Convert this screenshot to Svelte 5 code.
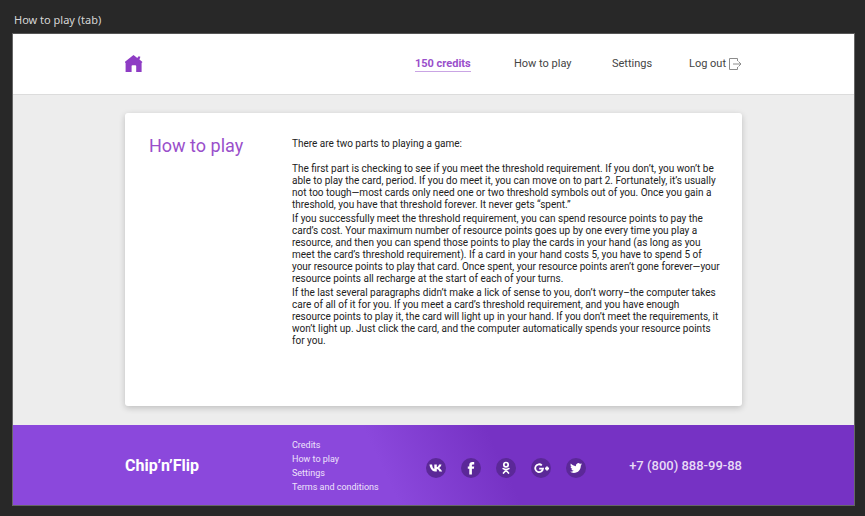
<script>
  const nav = [
    { label: 'How to play', href: '#how' },
    { label: 'Settings', href: '#settings' }
  ];

  const paragraphs = [
    `The first part is checking to see if you meet the threshold requirement. If you don’t, you won’t be
able to play the card, period. If you do meet it, you can move on to part 2. Fortunately, it’s usually
not too tough—most cards only need one or two threshold symbols out of you. Once you gain a
threshold, you have that threshold forever. It never gets “spent.”`,
    `If you successfully meet the threshold requirement, you can spend resource points to pay the
card’s cost. Your maximum number of resource points goes up by one every time you play a
resource, and then you can spend those points to play the cards in your hand (as long as you
meet the card’s threshold requirement). If a card in your hand costs 5, you have to spend 5 of
your resource points to play that card. Once spent, your resource points aren’t gone forever—your
resource points all recharge at the start of each of your turns.`,
    `If the last several paragraphs didn’t make a lick of sense to you, don’t worry–the computer takes
care of all of it for you. If you meet a card’s threshold requirement, and you have enough
resource points to play it, the card will light up in your hand. If you don’t meet the requirements, it
won’t light up. Just click the card, and the computer automatically spends your resource points
for you.`
  ];

  const links = ['Credits', 'How to play', 'Settings', 'Terms and conditions'];
</script>

<div class="canvas">
  <p class="caption">How to play (tab)</p>
  <div class="page">
    <header>
      <div class="wrap bar">
        <a class="home" href="#home" aria-label="Home">
          <svg viewBox="0 0 18 18" width="18" height="18"><path fill="#8e3cc4" d="M8.5 0 12.3 2.9 13 2V1.4H15.2V2.6L14.4 4.4 17.2 6.8V7.8H16.6V17H11.2V11.1C11.2 10.5 10.9 10.2 10.3 10.2H7.5C6.9 10.2 6.6 10.5 6.6 11.1V17H.6V7.8H0V6.8Z" /></svg>
        </a>
        <nav>
          <a class="credits" href="#credits">150 credits</a>
          {#each nav as item}
            <a href={item.href}>{item.label}</a>
          {/each}
          <a class="logout" href="#logout">
            Log out
            <svg viewBox="0 0 14 14" width="14" height="14" fill="none" stroke="#8c8c8c"><path d="M9.5 4V1.5H1.5V12.5H9.5V10M5 7H13M10.5 4.5 13 7 10.5 9.5" /></svg>
          </a>
        </nav>
      </div>
    </header>

    <main>
      <section class="wrap card">
        <h1>How to play</h1>
        <div class="text">
          <p class="lead">There are two parts to playing a game:</p>
          {#each paragraphs as text}
            <p>{text}</p>
          {/each}
        </div>
      </section>
    </main>

    <footer>
      <div class="wrap foot">
        <strong class="brand">Chip’n’Flip</strong>
        <ul class="links">
          {#each links as link}
            <li><a href="#footer">{link}</a></li>
          {/each}
        </ul>
        <div class="social">
          <a href="#vk" aria-label="VK">
            <svg viewBox="0 0 20 20"><path fill="#fff" d="M10.6 13.6C6.4 13.6 4.2 11 3.5 6.4H6.1C6.3 9 7.3 10.7 8.3 11V6.4H10.8V9.1C11.8 8.9 12.6 7.8 13 6.4H15.5C15.1 7.9 14.2 9.2 13.2 9.9C14.4 10.6 15.5 11.9 16.2 13.6H13.4C12.9 12.3 12 11.3 10.8 11.1V13.6Z" /></svg>
          </a>
          <a href="#facebook" aria-label="Facebook">
            <svg viewBox="0 0 20 20"><path fill="#fff" d="M8.3 16.4V10.8H6.8V8.5H8.3V7C8.3 5 9.4 4 11.3 4H13.2V6.4H11.9C11.2 6.4 10.9 6.7 10.9 7.3V8.5H13.2L12.9 10.8H10.9V16.4Z" /></svg>
          </a>
          <a href="#ok" aria-label="Odnoklassniki">
            <svg viewBox="0 0 20 20" fill="none" stroke="#fff" stroke-width="1.7" stroke-linecap="round"><circle cx="10" cy="6.7" r="2.2" /><path d="M7.2 10.6Q10 12.5 12.8 10.6M10 12.2 7.5 15M10 12.2 12.5 15" /></svg>
          </a>
          <a href="#google" aria-label="Google Plus">
            <svg viewBox="0 0 20 20" fill="none" stroke="#fff" stroke-width="1.8"><path d="M10.8 7.3A3.9 3.9 0 1 0 12 10.6H8.2M14 10.5H18M16 8.5V12.5" /></svg>
          </a>
          <a href="#twitter" aria-label="Twitter">
            <svg viewBox="0 0 24 24"><path fill="#fff" transform="translate(4.8 4.8) scale(.6)" d="M23.95 4.57a10 10 0 0 1-2.82.77 4.96 4.96 0 0 0 2.16-2.72c-.95.55-2 .95-3.13 1.18a4.92 4.92 0 0 0-8.38 4.48C7.69 8.1 4.07 6.13 1.64 3.16a4.92 4.92 0 0 0 1.52 6.57 4.9 4.9 0 0 1-2.23-.61v.06a4.92 4.92 0 0 0 3.95 4.83 4.99 4.99 0 0 1-2.21.08 4.94 4.94 0 0 0 4.6 3.42A9.87 9.87 0 0 1 0 19.54a13.99 13.99 0 0 0 7.56 2.21c9.05 0 14-7.5 14-13.98 0-.21 0-.42-.02-.63a9.94 9.94 0 0 0 2.46-2.55z" /></svg>
          </a>
        </div>
        <a class="phone" href="tel:+78008889988">+7 (800) 888-99-88</a>
      </div>
    </footer>
  </div>
</div>

<style>
  :global(body) {
    margin: 0;
    background: #282828;
  }

  .canvas {
    padding: 12px 10px 9px 12px;
    font-family: Roboto, sans-serif;
  }

  p,
  h1,
  ul {
    margin: 0;
    padding: 0;
    list-style: none;
  }

  a {
    color: inherit;
    text-decoration: none;
  }

  svg {
    display: block;
  }

  .caption {
    margin: 0 0 5px 2px;
    font: 11px/16px 'Noto Sans', sans-serif;
    color: #d6d6d6;
  }

  .page {
    border: 1px solid #666;
    border-top-color: #555;
    background: #ededed;
  }

  .wrap {
    box-sizing: border-box;
    margin: 0 112px;
  }

  header {
    background: #fff;
    border-bottom: 1px solid #dcdcdc;
  }

  .bar {
    display: flex;
    align-items: center;
    justify-content: space-between;
    height: 60px;
  }

  nav {
    display: grid;
    grid-template-columns: 99px 98px 77px auto;
    align-items: center;
    font-size: 11px;
    line-height: 14px;
    color: #444;
  }

  .credits {
    justify-self: start;
    padding-top: 1px;
    border-bottom: 1px solid #c9a4e4;
    font-weight: 700;
    color: #9a4fcb;
  }

  .logout {
    display: flex;
    align-items: center;
    gap: 2px;
  }

  main {
    padding: 18px 0 19px;
  }

  .card {
    display: grid;
    grid-template-columns: 143px 1fr;
    min-height: 293px;
    padding: 24px 16px 24px 24px;
    border-radius: 3px;
    background: #fff;
    box-shadow: 0 2px 6px rgba(0, 0, 0, 0.2);
  }

  h1 {
    font-size: 18px;
    line-height: 18px;
    font-weight: 400;
    color: #9a4fcb;
  }

  .text {
    display: grid;
    align-content: start;
    gap: 2px;
    padding-top: 1px;
    font-size: 10px;
    line-height: 12px;
    color: #222;
    white-space: pre-line;
  }

  .lead {
    margin-bottom: 11px;
  }

  footer {
    background: linear-gradient(65deg, #8b48dc 44%, #7632c4 58%);
    color: #fff;
  }

  .foot {
    display: grid;
    grid-template-columns: 167px 134px auto 1fr;
    align-items: center;
    height: 80px;
    padding-top: 2px;
  }

  .brand {
    font-size: 16px;
    line-height: 20px;
  }

  .links {
    font-size: 9px;
    line-height: 14px;
    color: #eee2fb;
  }

  .social {
    display: flex;
    gap: 15px;
    padding-top: 4px;
  }

  .social a {
    width: 20px;
    height: 20px;
    border-radius: 50%;
    background: #5b2898;
  }

  .phone {
    justify-self: end;
    font-size: 13px;
    line-height: 16px;
    font-weight: 500;
    color: #e8dbf6;
  }
</style>
